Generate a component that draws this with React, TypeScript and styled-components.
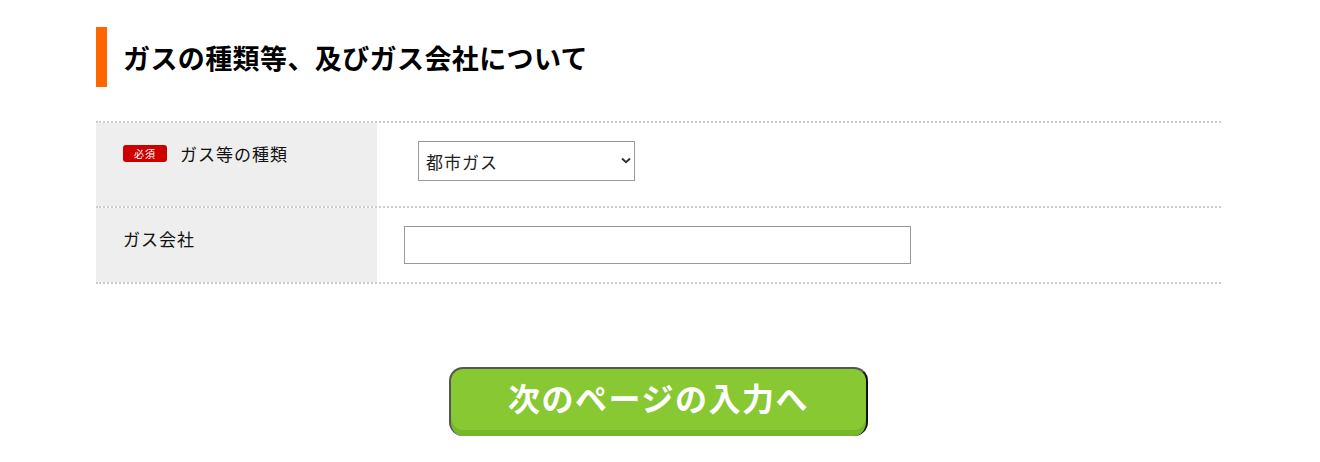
import React from 'react'
import styled, { createGlobalStyle } from 'styled-components'

const GlobalStyle = createGlobalStyle`
  body {
    margin: 0;
    background: #fff;
    font-family: "Noto Sans CJK JP", "Noto Sans", sans-serif;
    color: #111;
  }
`

const Page = styled.div`
  width: 1125px;
  margin-left: 96px;
  padding-top: 27px;
`

const Heading = styled.h2`
  margin: 0;
  height: 60px;
  display: flex;
  align-items: center;
  border-left: 11px solid #ff6600;
  padding-left: 16px;
  font-size: 27px;
  font-weight: 700;
  letter-spacing: 0.4px;
  color: #000;
`

const FormTable = styled.div`
  margin-top: 34px;
  border-top: 2px dotted #cccccc;
`

const Row = styled.div<{ $height: number }>`
  display: grid;
  grid-template-columns: 281px 1fr;
  box-sizing: border-box;
  height: ${p => p.$height}px;
  border-bottom: 2px dotted #cccccc;
`

const Label = styled.div`
  background: #eeeeee;
  display: flex;
  align-items: flex-start;
  gap: 13px;
  padding: 19px 0 0 27px;
  font-size: 17px;
  letter-spacing: 1px;
  line-height: 24px;
`

const Badge = styled.span`
  display: inline-flex;
  align-items: center;
  justify-content: center;
  width: 44px;
  height: 17px;
  margin-top: 3px;
  border-radius: 3px;
  background: #cc0000;
  color: #fff;
  font-size: 10px;
  letter-spacing: 1px;
  line-height: 1;
`

const Field = styled.div<{ $indent: number; $top: number }>`
  padding: ${p => p.$top}px 0 0 ${p => p.$indent}px;
`

const SelectBox = styled.div`
  position: relative;
  width: 217px;
  height: 40px;
`

const Select = styled.select`
  appearance: none;
  width: 100%;
  height: 100%;
  box-sizing: border-box;
  border: 1px solid #999;
  border-radius: 0;
  background: #fff;
  padding: 0 0 0 7px;
  font-family: inherit;
  font-size: 17px;
  letter-spacing: 1px;
  color: #222;
`

const Chevron = styled.svg`
  position: absolute;
  right: 4px;
  top: 16px;
  pointer-events: none;
`

const TextInput = styled.input`
  width: 507px;
  height: 38px;
  box-sizing: border-box;
  border: 1px solid #999;
  font-family: inherit;
  font-size: 16px;
  padding: 0 8px;
`

const Actions = styled.div`
  display: flex;
  justify-content: center;
  margin-top: 83px;
`

const NextButton = styled.button`
  width: 419px;
  height: 69px;
  box-sizing: border-box;
  border: 2px solid #555;
  border-right-color: #111;
  border-bottom: none;
  border-radius: 14px;
  background: #88c832;
  box-shadow: inset 0 -6px 0 #76b82a;
  color: #fff;
  font-family: inherit;
  font-size: 32px;
  font-weight: 700;
  letter-spacing: 1.5px;
  padding: 0 0 12px;
  cursor: pointer;
`

export default function App() {
  return (
    <>
      <GlobalStyle />
      <Page>
        <Heading>ガスの種類等、及びガス会社について</Heading>
        <FormTable>
          <Row $height={85}>
            <Label>
              <Badge>必須</Badge>
              ガス等の種類
            </Label>
            <Field $indent={41} $top={18}>
              <SelectBox>
                <Select defaultValue="city">
                  <option value="city">都市ガス</option>
                  <option value="lp">LPガス</option>
                </Select>
                <Chevron width="10" height="7" viewBox="0 0 10 7">
                  <path d="M1 1.5 L5 5.2 L9 1.5" fill="none" stroke="#333" strokeWidth="2" />
                </Chevron>
              </SelectBox>
            </Field>
          </Row>
          <Row $height={76}>
            <Label>ガス会社</Label>
            <Field $indent={27} $top={18}>
              <TextInput type="text" />
            </Field>
          </Row>
        </FormTable>
        <Actions>
          <NextButton>次のページの入力へ</NextButton>
        </Actions>
      </Page>
    </>
  )
}
